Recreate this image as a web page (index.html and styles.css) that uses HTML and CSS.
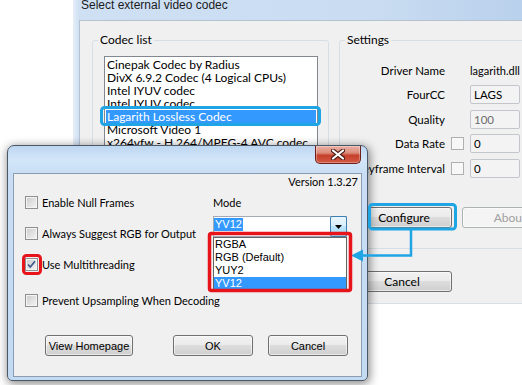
FILE: index.html
```html
<!DOCTYPE html>
<html lang="en">
<head>
  <meta charset="UTF-8">
  <meta name="viewport" content="width=device-width, initial-scale=1.0">
  <title>Select external video codec</title>
  <link rel="stylesheet" href="styles.css">
</head>
<body>
  <div class="screen">

    <!-- Background window: codec chooser -->
    <div class="codec-window">
      <div class="codec-title">Select external video codec</div>
      <div class="codec-client">
        <div class="codec-groups">
          <fieldset class="group group-list">
            <legend>Codec list</legend>
            <ul class="codec-list">
              <li>Cinepak Codec by Radius</li>
              <li>DivX 6.9.2 Codec (4 Logical CPUs)</li>
              <li>Intel IYUV codec</li>
              <li>Intel IYUV codec</li>
              <li class="selected">Lagarith Lossless Codec</li>
              <li>Microsoft Video 1</li>
              <li>x264vfw - H.264/MPEG-4 AVC codec</li>
            </ul>
          </fieldset>
          <fieldset class="group group-settings">
            <legend>Settings</legend>
            <div class="settings-grid">
              <span class="set-label">Driver Name</span><span></span><span class="set-value">lagarith.dll</span>
              <span class="set-label">FourCC</span><span></span><span class="field">LAGS</span>
              <span class="set-label">Quality</span><span></span><span class="field disabled">100</span>
              <span class="set-label">Data Rate</span><span class="small-check"></span><span class="field">0</span>
              <span class="set-label">Keyframe Interval</span><span class="small-check"></span><span class="field">0</span>
            </div>
            <div class="settings-buttons">
              <button class="win-btn wide">Configure</button>
              <button class="win-btn wide" disabled>About</button>
            </div>
          </fieldset>
        </div>
        <div class="codec-footer">
          <button class="win-btn footer-btn">OK</button>
          <button class="win-btn footer-btn">Cancel</button>
        </div>
      </div>
    </div>

    <!-- Front dialog: Lagarith configuration -->
    <div class="dialog">
      <div class="dialog-close">
        <svg width="14" height="11" viewBox="0 0 14 11">
          <path d="M2 1.5 L12 9.5 M12 1.5 L2 9.5" stroke="#4a1a14" stroke-width="4.2" stroke-linecap="round"/>
          <path d="M2 1.5 L12 9.5 M12 1.5 L2 9.5" stroke="#fff" stroke-width="2.2" stroke-linecap="round"/>
        </svg>
      </div>
      <div class="dialog-client">
        <div class="version">Version 1.3.27</div>
        <div class="dialog-main">
          <div class="options">
            <label class="option"><span class="check"></span>Enable Null Frames</label>
            <label class="option"><span class="check"></span>Always Suggest RGB for Output</label>
            <label class="option">
              <span class="check">
                <svg width="11" height="11" viewBox="0 0 11 11">
                  <path d="M2 5.5 L4.3 8 L9 2.3" fill="none" stroke="#3f5a8c" stroke-width="1.8"/>
                </svg>
              </span>Use Multithreading
            </label>
            <label class="option option-last"><span class="check"></span>Prevent Upsampling When Decoding</label>
          </div>
          <div class="mode">
            <div class="mode-label">Mode</div>
            <div class="combo">
              <span class="combo-value">YV12</span>
              <span class="combo-arrow">
                <svg width="7" height="4" viewBox="0 0 7 4"><path d="M0 0 H7 L3.5 4 Z" fill="#000"/></svg>
              </span>
              <ul class="combo-list">
                <li>RGBA</li>
                <li>RGB (Default)</li>
                <li>YUY2</li>
                <li class="selected">YV12</li>
              </ul>
            </div>
          </div>
        </div>
        <div class="dialog-buttons">
          <button class="win-btn dlg-btn homepage">View Homepage</button>
          <button class="win-btn dlg-btn ok">OK</button>
          <button class="win-btn dlg-btn cancel">Cancel</button>
        </div>
      </div>
    </div>

    <!-- Callout annotations drawn over the screenshot -->
    <svg class="annotations" width="522" height="385" viewBox="0 0 522 385">
      <rect x="101.5" y="107.5" width="218" height="17" rx="3" fill="none" stroke="#1fa5e3" stroke-width="3"/>
      <rect x="369.5" y="204.5" width="86" height="24.5" rx="3" fill="none" stroke="#1fa5e3" stroke-width="3"/>
      <path d="M411 230 V255.5 H361" fill="none" stroke="#1fa5e3" stroke-width="2.5"/>
      <path d="M351 255.5 L363 249.5 L363 261.5 Z" fill="#1fa5e3"/>
      <rect x="209.5" y="233.5" width="141" height="57" rx="2" fill="none" stroke="#e8141c" stroke-width="3.5"/>
      <rect x="23.5" y="255.5" width="17" height="18" rx="3" fill="none" stroke="#e8141c" stroke-width="3"/>
    </svg>

  </div>
</body>
</html>
```

FILE: styles.css
```css
/* General */
* {
  box-sizing: border-box;
}

body {
  margin: 0;
  background-color: #fff;
  font-family: Lato, "Liberation Sans", sans-serif;
  font-size: 12px;
  color: #000;
}

.screen {
  position: relative;
  width: 522px;
  height: 385px;
  overflow: hidden;
}

/* Background window */
.codec-window {
  position: absolute;
  left: 73px;
  top: -10px;
  width: 500px;
  padding-left: 6px;
  background: linear-gradient(to right, #e6eef8, #cfe0f4 6px, #c9dcf1 60%, #b4cdeb);
}

.codec-title {
  height: 30px;
  padding: 8px 0 0 2px;
  line-height: 14px;
  font-family: "Liberation Sans", sans-serif;
  font-size: 12px;
  color: #1a1a1a;
}

.codec-client {
  background-color: #f0f0f0;
  border-top: 1px solid #b4c2d2;
  border-left: 1px solid #b4c2d2;
  border-bottom: 1px solid #d9dfe6;
  padding: 12px 0 11px 12px;
}

.codec-groups {
  display: flex;
  gap: 10px;
}

.group {
  margin: 0;
  padding: 0;
  min-width: 0;
  height: 216px;
  border: 1px solid #d5dfe5;
  border-radius: 3px;
}

.group legend {
  margin-left: 5px;
  padding: 0 2px;
  line-height: 14px;
}

.group-list {
  width: 237px;
}

.group-settings {
  width: 220px;
}

.codec-list {
  width: 214px;
  height: 190px;
  margin: 9px 0 0 11px;
  padding: 1px;
  list-style: none;
  background-color: #fff;
  border: 1px solid #828790;
}

.codec-list li {
  line-height: 13px;
  padding-left: 1px;
  white-space: nowrap;
}

.codec-list li.selected {
  background-color: #3399ff;
  color: #fff;
}

.settings-grid {
  display: grid;
  grid-template-columns: 96px 13px 50px;
  grid-auto-rows: 20px;
  column-gap: 6px;
  row-gap: 4.5px;
  align-items: center;
  margin: 13px 0 0 9px;
  font-size: 11.5px;
}

.set-label {
  text-align: right;
  white-space: nowrap;
}

.set-value {
  white-space: nowrap;
  font-size: 11px;
}

.field {
  height: 19px;
  line-height: 17px;
  padding-left: 3px;
  border: 1px solid #c3c6cb;
  border-radius: 2px;
  background-color: #f3f3f3;
}

.field.disabled {
  color: #6d6d6d;
}

.small-check {
  width: 13px;
  height: 13px;
  border: 1px solid #b0b0b0;
  background-color: #f7f7f7;
}

.settings-buttons {
  display: flex;
  gap: 10px;
  margin: 29px 0 0 16px;
}

.win-btn {
  height: 21px;
  padding: 0;
  border: 1px solid #707070;
  border-radius: 3px;
  background: linear-gradient(#f2f2f2 0%, #ebebeb 49%, #dddddd 50%, #cfcfcf 100%);
  box-shadow: inset 0 0 0 1px rgba(255, 255, 255, 0.55);
  font-family: Lato, "Liberation Sans", sans-serif;
  font-size: 12px;
  color: #000;
}

.win-btn:disabled {
  color: #a0a0a0;
  border-color: #adb2b5;
  background: #f4f4f4;
}

.win-btn.wide {
  width: 96px;
}

.codec-footer {
  display: flex;
  gap: 10px;
  margin-top: 22px;
  padding-left: 150px;
}

.footer-btn {
  width: 100px;
}

/* Front dialog */
.dialog {
  position: absolute;
  left: 7px;
  top: 145px;
  width: 361px;
  height: 236px;
  padding: 27px 5px 3px 5px;
  border: 1px solid #4b5868;
  border-radius: 7px 7px 5px 5px;
  background: linear-gradient(#bdd6f1 0px, #d3e6f9 14px, #c9def5 27px, #c3daf3 100%);
  box-shadow: 1px 2px 10px 1px rgba(0, 0, 0, 0.45);
  font-size: 11px;
}

.dialog-close {
  position: absolute;
  left: 307px;
  top: 0;
  width: 46px;
  height: 18px;
  display: flex;
  align-items: center;
  justify-content: center;
  border: 1px solid #6d2019;
  border-top: none;
  border-radius: 0 0 5px 5px;
  background: linear-gradient(#eab0a4 0%, #dc8d7c 40%, #c6402c 55%, #d15a42 100%);
  box-shadow: inset 0 0 0 1px rgba(255, 255, 255, 0.3);
}

.dialog-client {
  height: 204px;
  display: flex;
  flex-direction: column;
  background-color: #f0f0f0;
  border: 1px solid #8b9db2;
}

.version {
  margin-top: 1px;
  padding-right: 3px;
  line-height: 14px;
  text-align: right;
}

.dialog-main {
  display: flex;
}

.options {
  width: 199px;
  flex-shrink: 0;
  display: flex;
  flex-direction: column;
  margin-top: 7px;
  padding-left: 11px;
  white-space: nowrap;
}

.option {
  display: flex;
  align-items: center;
  gap: 4px;
  height: 13px;
  line-height: 13px;
}

.option + .option {
  margin-top: 18px;
}

.option.option-last {
  margin-top: 23px;
}

.check {
  flex-shrink: 0;
  display: flex;
  align-items: center;
  justify-content: center;
  width: 13px;
  height: 13px;
  border: 1px solid #8e8f8f;
  background: linear-gradient(135deg, #cbcbcb, #f5f5f5);
  box-shadow: inset 0 0 0 1px #f4f4f4;
}

.mode {
  margin-top: 7px;
}

.mode-label {
  line-height: 14px;
}

.combo {
  position: relative;
  display: flex;
  width: 134px;
  height: 21px;
  margin-top: 6px;
  border: 1px solid #a3aab5;
  background-color: #fff;
  font-family: "Liberation Sans", sans-serif;
  font-size: 11px;
}

.combo-value {
  align-self: flex-start;
  margin-top: 1px;
  padding: 0 1px;
  line-height: 13px;
  background-color: #3399ff;
  color: #fff;
}

.combo-arrow {
  position: absolute;
  top: -1px;
  right: -1px;
  bottom: -1px;
  width: 17px;
  display: flex;
  align-items: center;
  justify-content: center;
  border: 1px solid #3c7fb1;
  border-radius: 2px;
  background: linear-gradient(#eaf6fd, #d9f0fc 45%, #bee6fd 50%, #a7d9f5);
}

.combo-list {
  position: absolute;
  left: -1px;
  top: 20px;
  width: 134px;
  height: 53px;
  margin: 0;
  padding: 0;
  list-style: none;
  background-color: #fff;
  border: 1px solid #646464;
}

.combo-list li {
  line-height: 13px;
  padding-left: 1px;
}

.combo-list li.selected {
  background-color: #3399ff;
  color: #fff;
}

.dialog-buttons {
  display: flex;
  margin-top: 28px;
  padding-left: 31px;
}

.dlg-btn {
  font-family: "Liberation Sans", sans-serif;
  font-size: 11px;
}

.dlg-btn.homepage {
  width: 88px;
}

.dlg-btn.ok {
  width: 80px;
  margin-left: 40px;
}

.dlg-btn.cancel {
  width: 80px;
  margin-left: 15px;
}

/* Annotation overlay */
.annotations {
  position: absolute;
  left: 0;
  top: 0;
  pointer-events: none;
}
```
